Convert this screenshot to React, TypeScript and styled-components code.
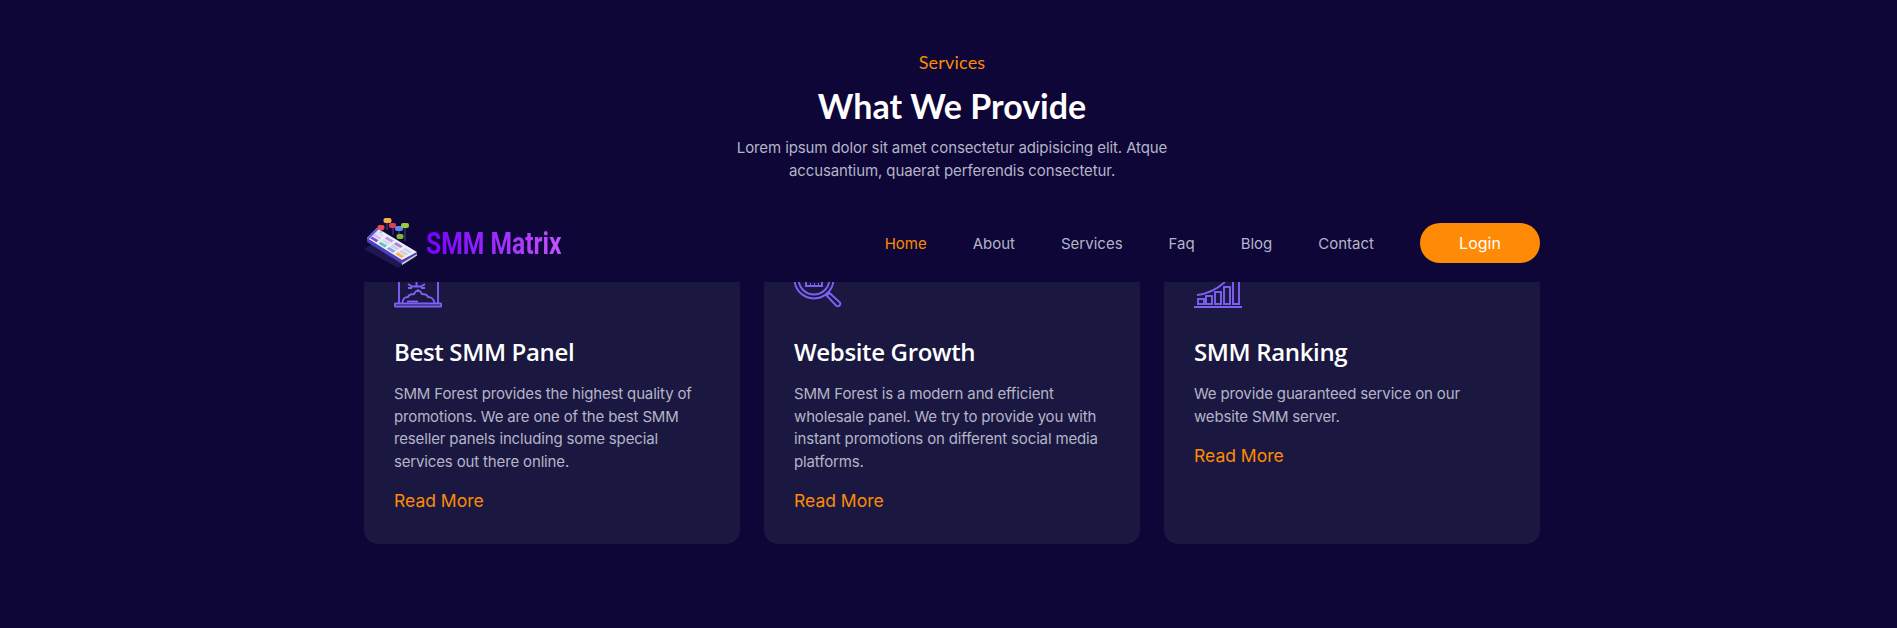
import styled, { createGlobalStyle } from "styled-components";

const services = [
  {
    title: "Best SMM Panel",
    text: "SMM Forest provides the highest quality of promotions. We are one of the best SMM reseller panels including some special services out there online.",
    icon: "panel",
  },
  {
    title: "Website Growth",
    text: "SMM Forest is a modern and efficient wholesale panel. We try to provide you with instant promotions on different social media platforms.",
    icon: "growth",
  },
  {
    title: "SMM Ranking",
    text: "We provide guaranteed service on our website SMM server.",
    icon: "ranking",
  },
];

const navLinks = ["Home", "About", "Services", "Faq", "Blog", "Contact"];

// app tiles on the phone screen, rows run from the near edge to the far edge
const tileRows = [
  ["#7a4fd0", "#5ac8b4", "#86a4f0", "#ffb050"],
  ["#d4bcf4", "#d8d8ea", "#d0d0e2", "#d0d0e2"],
  ["#e2dcf6", "#bc98ee", "#a484e4", "#d4d4e4"],
];

// corners of the screen in the logo's own coordinates
const screenPoint = (u: number, v: number) => {
  const x = (1 - v) * (3 + 35 * u) + v * (13 + 40 * u);
  const y = (1 - v) * (21 + 22 * u) + v * (11 + 24 * u);
  return `${x.toFixed(1)},${y.toFixed(1)}`;
};

const tilePoints = (col: number, row: number) => {
  const u0 = 0.06 + col * 0.235;
  const u1 = u0 + 0.175;
  const v0 = 0.1 + row * 0.27;
  const v1 = v0 + 0.2;
  return [
    screenPoint(u0, v0),
    screenPoint(u1, v0),
    screenPoint(u1, v1),
    screenPoint(u0, v1),
  ].join(" ");
};

const LogoMark = () => (
  <svg width="56" height="52" viewBox="0 0 56 52">
    <path d="M0 32 L34 51 L53 40 L18 21 Z" fill="#1f1850" />
    <path d="M3 21 V25 L38 47 L53 38 V35 L38 43 Z" fill="#4a3fc0" />
    <path d="M38 46 L53 37 V38.5 L38 48 Z" fill="#ddd8bc" />
    <path d="M3 21 L13 11 L53 35 L38 43 Z" fill="#eeeef8" />
    <path d="M3 21 L13 11 L15 12 L5 22 Z" fill="#5a58e0" />
    {tileRows.map((row, r) =>
      row.map((color, c) => (
        <polygon key={`${r}-${c}`} points={tilePoints(c, r)} fill={color} />
      ))
    )}
    <path d="M17 12 V16 M23 5 V13 M29 10 V18 M35 13 V22 M41 10 V24" stroke="#6a6a90" strokeWidth="0.7" />
    <rect x="13.5" y="8" width="7" height="5" rx="2" fill="#ef4a50" />
    <rect x="19.5" y="1" width="8" height="5" rx="2" fill="#f4b040" />
    <rect x="25" y="6" width="7" height="5" rx="2" fill="#e0404f" />
    <rect x="31" y="9" width="8" height="5" rx="2" fill="#5a8cf0" />
    <rect x="37" y="6" width="8" height="5" rx="2" fill="#98c83c" />
    <rect x="32.5" y="17" width="7" height="5" rx="2" fill="#80b830" />
  </svg>
);

const PanelIcon = () => (
  <IconSvg viewBox="0 0 48 26">
    <path d="M5 0 V21 M44 0 V21" />
    <rect x="0.8" y="21.5" width="46.5" height="3" rx="1" />
    <path d="M8.5 21 C8.5 17 11 15 14 15 C15 12 18 12 20 12 C21 10 22 9 24 8 C26 9 27 10 28 12 C30 12 33 12 34 15 C37 15 40 17 40.5 21" />
    <path d="M13 19.5 H24" />
    <path d="M14 2 L18 4.5 H27 L31 2 M14 6 H18 M27 6 H31 M22.5 0 V4.5" />
  </IconSvg>
);

const GrowthIcon = () => (
  <IconSvg viewBox="0 0 48 26">
    <circle cx="20" cy="-3" r="19.5" />
    <circle cx="20" cy="-3" r="15.5" />
    <path d="M12 0 V4 H28 V0 M16 2 H17 M20 2 H21 M24 2 H25" />
    <path d="M33 11 L35 13 M35 10.5 L46 20.5 A2.6 2.6 0 0 1 42.5 24 L32.5 13.5 A2.2 2.2 0 0 1 35 10.5 Z" />
  </IconSvg>
);

const RankingIcon = () => (
  <IconSvg viewBox="0 0 48 26">
    <path d="M3 13 C14 12 23 7 31 0" />
    <rect x="4" y="17" width="6" height="5" />
    <rect x="12" y="14" width="6" height="8" />
    <rect x="21" y="10" width="6" height="12" />
    <rect x="30" y="5" width="6" height="17" />
    <path d="M39 0 V22 H45 V0" />
    <path d="M0 25 H48" />
  </IconSvg>
);

const icons: Record<string, () => React.ReactElement> = {
  panel: PanelIcon,
  growth: GrowthIcon,
  ranking: RankingIcon,
};

export default function App() {
  return (
    <>
      <GlobalStyle />
      <Page>
        <SectionHead>
          <Eyebrow>Services</Eyebrow>
          <Heading>What We Provide</Heading>
          <Intro>
            Lorem ipsum dolor sit amet consectetur adipisicing elit. Atque
            <br />
            accusantium, quaerat perferendis consectetur.
          </Intro>
        </SectionHead>

        <Header>
          <Brand>
            <LogoMark />
            <BrandName>SMM Matrix</BrandName>
          </Brand>
          <Nav>
            {navLinks.map((link) => (
              <NavItem key={link} $active={link === "Home"}>
                {link}
              </NavItem>
            ))}
            <LoginButton>Login</LoginButton>
          </Nav>
        </Header>

        <Cards>
          {services.map((s) => {
            const Icon = icons[s.icon];
            return (
              <Card key={s.title}>
                <Icon />
                <CardTitle>{s.title}</CardTitle>
                <CardText>{s.text}</CardText>
                <ReadMore>Read More</ReadMore>
              </Card>
            );
          })}
        </Cards>
      </Page>
    </>
  );
}

const GlobalStyle = createGlobalStyle`
  * {
    box-sizing: border-box;
  }
  body {
    margin: 0;
    background: #0d0636;
    font-family: "Inter", "Liberation Sans", sans-serif;
  }
`;

const Page = styled.div`
  width: 1176px;
  height: 628px;
  margin-left: 364px;
  padding-top: 50px;
`;

const SectionHead = styled.div`
  text-align: center;
`;

const Eyebrow = styled.div`
  color: #ff8a05;
  font-family: "Lato", sans-serif;
  font-size: 18px;
  line-height: 24px;
  letter-spacing: 0.2px;
`;

const Heading = styled.h2`
  margin: 10px 0 0;
  color: #fff;
  font-family: "Lato", sans-serif;
  font-size: 34px;
  font-weight: 700;
  line-height: 44px;
`;

const Intro = styled.p`
  margin: 8px 0 0;
  color: #b5b4c9;
  font-size: 15px;
  line-height: 23px;
  letter-spacing: -0.1px;
`;

const Header = styled.header`
  display: flex;
  align-items: center;
  justify-content: space-between;
  height: 78px;
  margin-top: 22px;
`;

const Brand = styled.div`
  display: flex;
  align-items: center;
  gap: 6px;
`;

const BrandName = styled.span`
  font-family: "Roboto", sans-serif;
  font-size: 32px;
  font-weight: 700;
  background: linear-gradient(90deg, #7600ff, #c254ff);
  -webkit-background-clip: text;
  background-clip: text;
  color: transparent;
  transform: scaleX(0.77);
  transform-origin: left center;
`;

const Nav = styled.nav`
  display: flex;
  align-items: center;
  gap: 46px;
`;

const NavItem = styled.a<{ $active?: boolean }>`
  color: ${(p) => (p.$active ? "#ff8a05" : "#b5b4c9")};
  font-size: 15px;
`;

const LoginButton = styled.button`
  width: 120px;
  height: 40px;
  border: none;
  border-radius: 20px;
  background: #ff8a05;
  color: #fff;
  font-family: inherit;
  font-size: 16px;
  font-weight: 400;
`;

const Cards = styled.div`
  display: grid;
  grid-template-columns: repeat(3, 376px);
  gap: 24px;
`;

const Card = styled.div`
  height: 262px;
  padding: 0 30px;
  background: #1a1840;
  border-radius: 0 0 14px 14px;
`;

const IconSvg = styled.svg`
  display: block;
  width: 48px;
  height: 26px;
  fill: none;
  stroke: #7f60f6;
  stroke-width: 1.9;
`;

const CardTitle = styled.h3`
  margin: 28px 0 0;
  color: #fff;
  font-family: "Open Sans", sans-serif;
  font-size: 24px;
  font-weight: 600;
  line-height: 32px;
  letter-spacing: -0.35px;
`;

const CardText = styled.p`
  margin: 15px 0 0;
  color: #b5b4c9;
  font-size: 15px;
  line-height: 22.5px;
  letter-spacing: -0.15px;
`;

const ReadMore = styled.a`
  display: block;
  margin-top: 16px;
  color: #ff8a05;
  font-size: 17.5px;
  line-height: 24px;
`;
